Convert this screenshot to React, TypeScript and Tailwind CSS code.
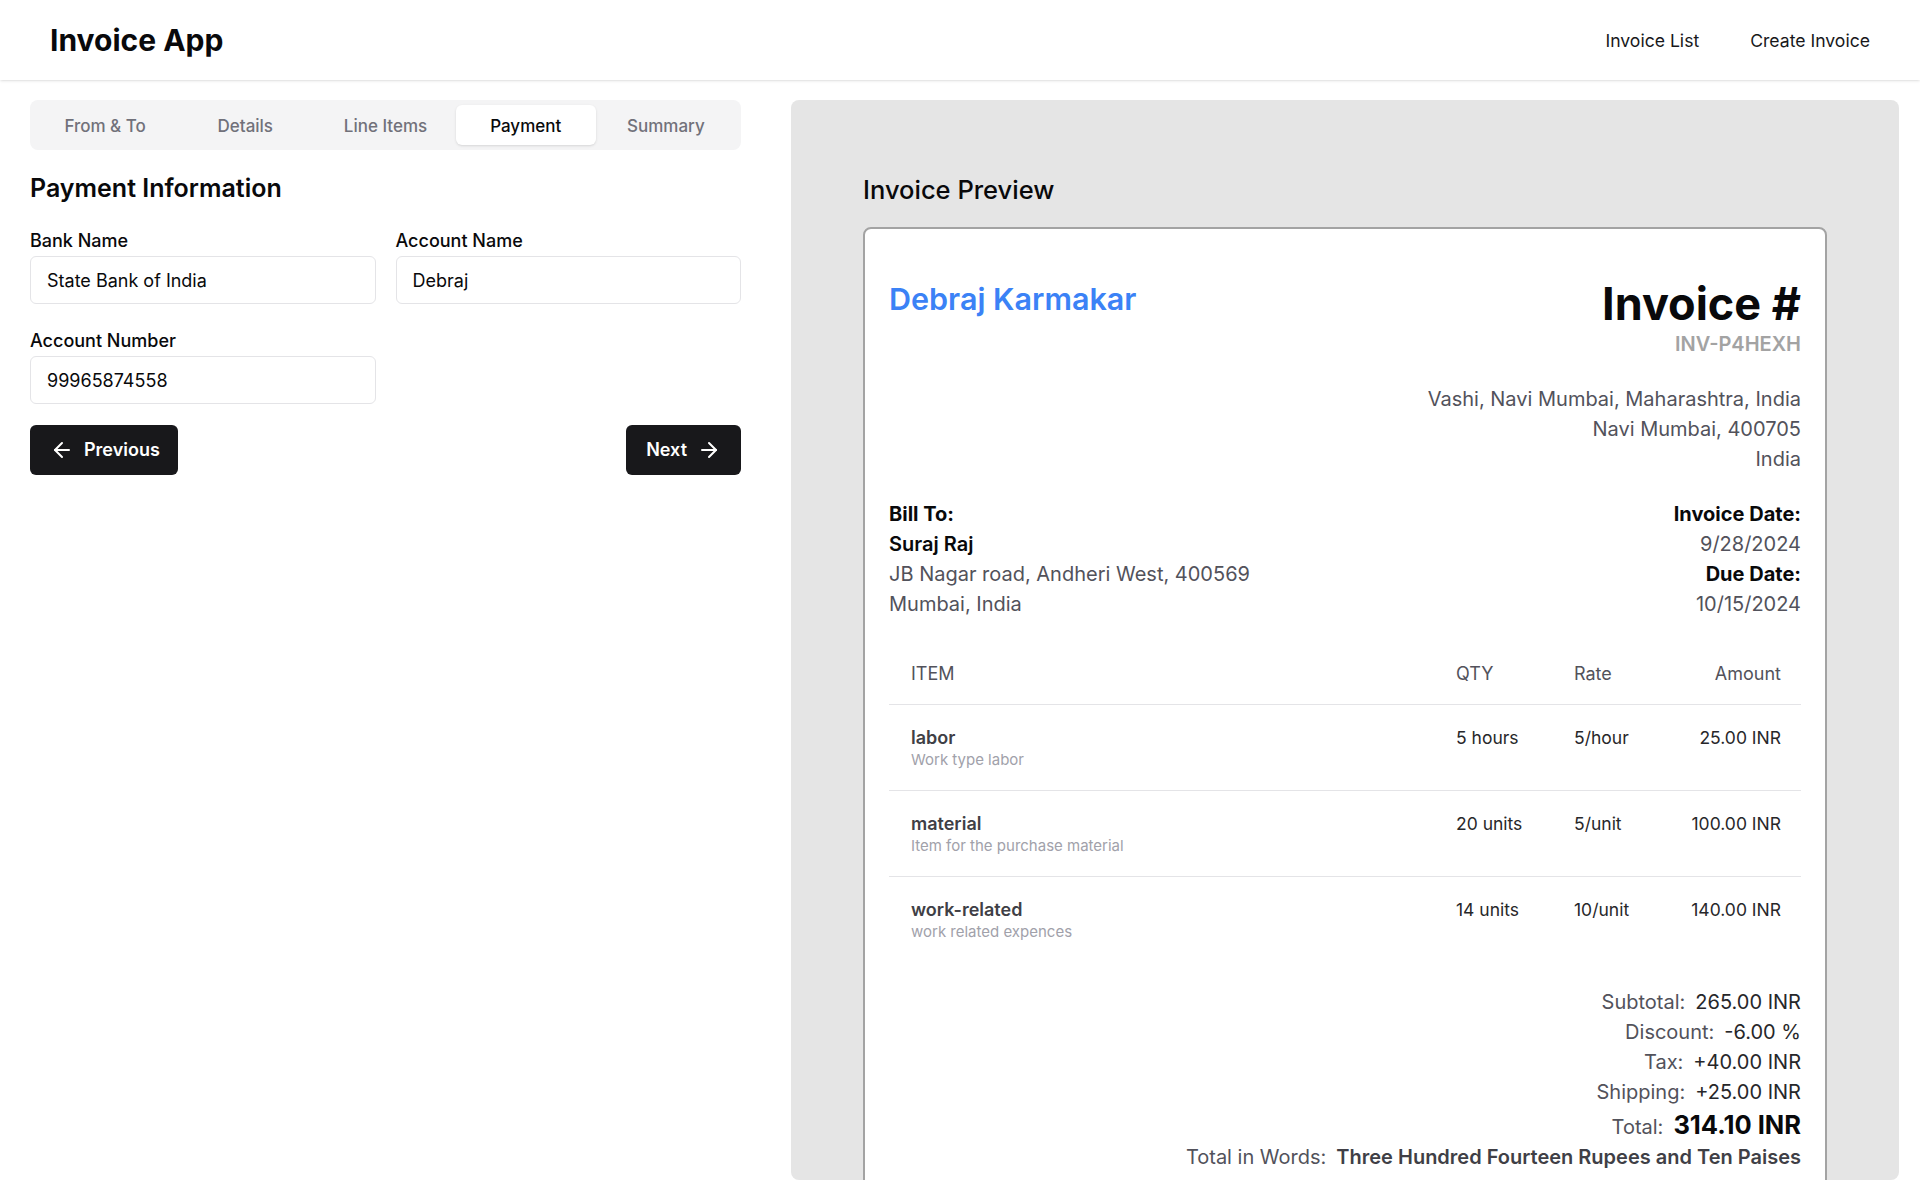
import { ArrowLeft, ArrowRight } from "lucide-react";

const tabs = ["From & To", "Details", "Line Items", "Payment", "Summary"];

const items = [
  { name: "labor", desc: "Work type labor", qty: "5 hours", rate: "5/hour", amount: "25.00 INR" },
  { name: "material", desc: "Item for the purchase material", qty: "20 units", rate: "5/unit", amount: "100.00 INR" },
  { name: "work-related", desc: "work related expences", qty: "14 units", rate: "10/unit", amount: "140.00 INR" },
];

const totals = [
  { label: "Subtotal:", value: "265.00 INR" },
  { label: "Discount:", value: "-6.00 %" },
  { label: "Tax:", value: "+40.00 INR" },
  { label: "Shipping:", value: "+25.00 INR" },
];

function Field({ label, value }: { label: string; value: string }) {
  return (
    <div>
      <label className="mb-px block text-lg font-medium leading-7 text-[#09090b]">{label}</label>
      <input
        readOnly
        value={value}
        className="h-12 w-full rounded-md border border-[#e4e4e7] bg-white px-4 text-lg text-[#09090b] outline-none"
      />
    </div>
  );
}

export default function App() {
  return (
    <div className="min-h-screen bg-white font-[Inter,sans-serif]">
      {/* Header */}
      <header className="relative z-10 flex h-20 items-center justify-between bg-white pl-[50px] pr-[50px] shadow-sm">
        <h1 className="text-3xl font-bold text-[#09090b]">Invoice App</h1>
        <nav className="flex gap-[51px] pt-[2px] text-[17.6px] text-[#18181b]">
          <a href="#">Invoice List</a>
          <a href="#">Create Invoice</a>
        </nav>
      </header>

      <main className="flex gap-[50px] pb-5 pl-[30px] pr-[21px] pt-5">
        {/* Left - Form */}
        <section className="w-[711px] shrink-0">
          <div className="grid h-[50px] grid-cols-5 rounded-lg bg-[#f4f4f5] p-[5px]">
            {tabs.map((tab) => (
              <button
                key={tab}
                className={
                  tab === "Payment"
                    ? "h-10 rounded-md bg-white pt-[3px] text-[17px] font-medium text-[#09090b] shadow-sm"
                    : "h-10 rounded-md pt-[3px] text-[17px] font-medium text-[#71717a]"
                }
              >
                {tab}
              </button>
            ))}
          </div>

          <h2 className="mt-[22px] text-[25px] font-semibold leading-8 text-[#09090b]">Payment Information</h2>

          <div className="mt-[23px] grid grid-cols-2 gap-x-5 gap-y-[23px]">
            <Field label="Bank Name" value="State Bank of India" />
            <Field label="Account Name" value="Debraj" />
            <Field label="Account Number" value="99965874558" />
          </div>

          <div className="mt-[21px] flex justify-between">
            <button className="flex h-[50px] items-center gap-2.5 rounded-md bg-[#18181b] pl-5 pr-[18px] text-lg font-semibold text-white">
              <ArrowLeft size={24} />
              Previous
            </button>
            <button className="flex h-[50px] items-center gap-2.5 rounded-md bg-[#18181b] px-5 text-lg font-semibold text-white">
              Next
              <ArrowRight size={24} />
            </button>
          </div>
        </section>

        {/* Right - Preview */}
        <section className="h-[1080px] flex-1 overflow-hidden rounded-lg bg-[#e5e5e5] px-[72px] pt-[74px]">
          <h2 className="mb-[21px] text-[25.5px] font-medium leading-8 text-[#09090b]">Invoice Preview</h2>

          <div className="rounded-lg border-2 border-[#a3a3a3] bg-white px-6 pb-10 pt-[50px]">
            <div className="flex items-start justify-between">
              <div className="pt-0.5 text-[30.5px] font-semibold leading-9 text-[#3b82f6]">Debraj Karmakar</div>
              <div className="text-right">
                <div className="pt-[2px] text-[45px] font-bold leading-[46px] text-[#09090b]">Invoice #</div>
                <div className="mt-[3px] text-xl font-semibold leading-7 text-[#a3a3a3]">INV-P4HEXH</div>
              </div>
            </div>

            <div className="mt-[26px] text-right text-xl leading-[30px] text-[#52525b]">
              <div>Vashi, Navi Mumbai, Maharashtra, India</div>
              <div>Navi Mumbai, 400705</div>
              <div>India</div>
            </div>

            <div className="mt-[25px] flex justify-between text-xl leading-[30px]">
              <div>
                <div className="font-bold text-[#09090b]">Bill To:</div>
                <div className="font-semibold text-[#09090b]">Suraj Raj</div>
                <div className="text-[#52525b]">JB Nagar road, Andheri West, 400569</div>
                <div className="text-[#52525b]">Mumbai, India</div>
              </div>
              <div className="text-right">
                <div className="font-bold text-[#09090b]">Invoice Date:</div>
                <div className="text-[#52525b]">9/28/2024</div>
                <div className="font-bold text-[#09090b]">Due Date:</div>
                <div className="text-[#52525b]">10/15/2024</div>
              </div>
            </div>

            <table className="mt-[25px] w-full table-fixed border-collapse">
              <colgroup>
                <col />
                <col className="w-[118px]" />
                <col className="w-[111px]" />
                <col className="w-[136px]" />
              </colgroup>
              <thead>
                <tr className="border-b border-[#e4e4e7] text-lg leading-7 text-[#52525b]">
                  <th className="py-4 pl-[22px] pr-5 text-left font-normal">ITEM</th>
                  <th className="px-5 py-4 text-left font-normal">QTY</th>
                  <th className="px-5 py-4 text-left font-normal">Rate</th>
                  <th className="px-5 py-4 text-right font-normal">Amount</th>
                </tr>
              </thead>
              <tbody>
                {items.map((item, i) => (
                  <tr
                    key={item.name}
                    className={i < items.length - 1 ? "border-b border-[#e4e4e7]" : ""}
                  >
                    <td className="pb-5 pl-[22px] pr-5 pt-[21px] align-top">
                      <div className="text-lg font-semibold leading-6 text-[#3f3f46]">{item.name}</div>
                      <div className="text-[15px] leading-5 text-[#a1a1aa]">{item.desc}</div>
                    </td>
                    <td className="px-5 pb-5 pt-[21px] align-top text-[17.5px] leading-6 text-[#27272a]">{item.qty}</td>
                    <td className="px-5 pb-5 pt-[21px] align-top text-[17.5px] leading-6 text-[#27272a]">{item.rate}</td>
                    <td className="px-5 pb-5 pt-[21px] text-right align-top text-[17.5px] leading-6 text-[#27272a]">{item.amount}</td>
                  </tr>
                ))}
              </tbody>
            </table>

            <div className="mt-[25px] text-xl leading-[30px]">
              {totals.map((t) => (
                <div key={t.label} className="flex justify-end gap-2.5">
                  <span className="text-[#52525b]">{t.label}</span>
                  <span className="text-[#27272a]">{t.value}</span>
                </div>
              ))}
              <div className="flex items-baseline justify-end gap-2.5">
                <span className="text-[#52525b]">Total:</span>
                <span className="text-[25.5px] font-bold leading-[35px] text-[#09090b]">314.10 INR</span>
              </div>
              <div className="flex justify-end gap-2.5">
                <span className="text-[#52525b]">Total in Words:</span>
                <span className="font-semibold text-[#3f3f46]">Three Hundred Fourteen Rupees and Ten Paises</span>
              </div>
            </div>
          </div>
        </section>
      </main>
    </div>
  );
}
